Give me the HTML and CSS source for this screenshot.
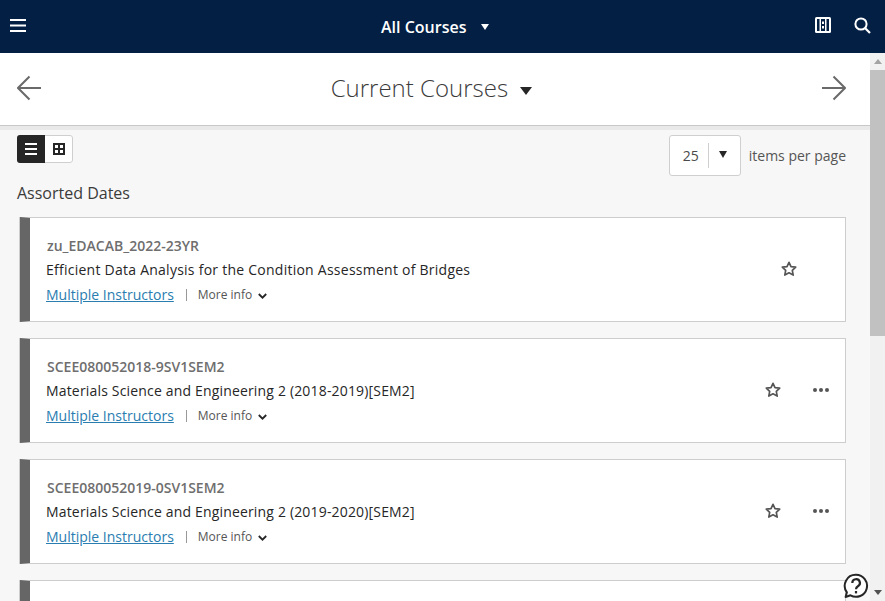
FILE: index.html
```html
<!DOCTYPE html>
<html lang="en">
<head>
<meta charset="utf-8">
<title>Current Courses</title>
<link rel="stylesheet" href="styles.css">
</head>
<body>
<header class="topbar">
  <button class="icon-btn" aria-label="Menu">
    <svg width="16" height="13" viewBox="0 0 16 13"><path d="M0 0h16v2H0zM0 5.500h16v2H0zM0 11h16v2H0z" fill="#fff"/></svg>
  </button>
  <div class="topbar-title">All Courses <span class="caret caret-white"></span></div>
  <div class="topbar-actions">
    <svg width="16" height="16" viewBox="0 0 16 16"><rect width="16" height="16" rx="1.500" fill="#fff"/><path d="M2 2h2.500v12H2zM11.500 2H14v12h-2.500zM6 2h4v12H6z" fill="#031f44"/><path d="M7 4.500h2v2.500H7zM7 9h2v2.500H7z" fill="#fff"/></svg>
    <svg width="17" height="17" viewBox="0 0 17 17" fill="none" stroke="#fff"><circle cx="7" cy="7" r="5.600" stroke-width="2"/><path d="M11 11l5 5" stroke-width="2.200"/></svg>
  </div>
</header>
<div class="shell">
  <main class="main">
    <div class="title-row">
      <svg class="arrow" width="25" height="26" viewBox="0 0 25 26" fill="none" stroke="#6a6a6a" stroke-width="2"><path d="M24 13H1.500M12.500 1.500L1 13l11.500 11.500"/></svg>
      <h1 class="page-title">Current Courses <span class="caret caret-dark"></span></h1>
      <svg class="arrow" width="25" height="26" viewBox="0 0 25 26" fill="none" stroke="#6a6a6a" stroke-width="2"><path d="M1 13h23M12.500 1.500L24 13 12.500 24.500"/></svg>
    </div>
    <div class="title-band"></div>
    <div class="controls">
      <div class="view-toggle">
        <span class="view view-on"><svg width="12" height="12" viewBox="0 0 12 12"><path d="M0 0h12v2H0zM0 5h12v2H0zM0 10h12v2H0z" fill="#fff"/></svg></span>
        <span class="view"><svg width="12" height="12" viewBox="0 0 12 12"><path fill-rule="evenodd" d="M0 0h12v12H0zM2 2v3h3V2zM7 2v3h3V2zM2 7v3h3V7zM7 7v3h3V7z" fill="#262626"/></svg></span>
      </div>
      <div class="pager">
        <div class="select"><span class="select-value">25</span><span class="select-arrow"><span class="caret caret-small"></span></span></div>
        <span class="pager-label">items per page</span>
      </div>
    </div>
    <h2 class="group-title">Assorted Dates</h2>
    <section class="card">
      <div class="card-body">
        <div class="code">zu_EDACAB_2022-23YR</div>
        <div class="name name-long">Efficient Data Analysis for the Condition Assessment of Bridges</div>
        <div class="meta"><a class="instructors" href="#">Multiple Instructors</a><span class="sep"></span><span class="more">More info</span><svg class="chev" width="9" height="6" viewBox="0 0 9 6" fill="none" stroke="#262626" stroke-width="1.800"><path d="M.8 1l3.700 3.700L8.200 1"/></svg></div>
      </div>
      <div class="card-actions card-actions-single">
        <svg class="star" width="16" height="16" viewBox="0 0 16 16" fill="none" stroke="#555" stroke-width="1.700" stroke-linejoin="round"><path d="M8 1.300l2 4.300 4.700.6-3.400 3.200.9 4.700L8 11.800l-4.200 2.300.9-4.700L1.300 6.200 6 5.600z"/></svg>
      </div>
    </section>
    <section class="card">
      <div class="card-body">
        <div class="code">SCEE080052018-9SV1SEM2</div>
        <div class="name">Materials Science and Engineering 2 (2018-2019)[SEM2]</div>
        <div class="meta"><a class="instructors" href="#">Multiple Instructors</a><span class="sep"></span><span class="more">More info</span><svg class="chev" width="9" height="6" viewBox="0 0 9 6" fill="none" stroke="#262626" stroke-width="1.800"><path d="M.8 1l3.700 3.700L8.200 1"/></svg></div>
      </div>
      <div class="card-actions">
        <svg class="star" width="16" height="16" viewBox="0 0 16 16" fill="none" stroke="#555" stroke-width="1.700" stroke-linejoin="round"><path d="M8 1.300l2 4.300 4.700.6-3.400 3.200.9 4.700L8 11.800l-4.200 2.300.9-4.700L1.300 6.200 6 5.600z"/></svg>
        <svg width="16" height="4" viewBox="0 0 16 4" fill="#555"><circle cx="2" cy="2" r="2"/><circle cx="8" cy="2" r="2"/><circle cx="14" cy="2" r="2"/></svg>
      </div>
    </section>
    <section class="card">
      <div class="card-body">
        <div class="code">SCEE080052019-0SV1SEM2</div>
        <div class="name">Materials Science and Engineering 2 (2019-2020)[SEM2]</div>
        <div class="meta"><a class="instructors" href="#">Multiple Instructors</a><span class="sep"></span><span class="more">More info</span><svg class="chev" width="9" height="6" viewBox="0 0 9 6" fill="none" stroke="#262626" stroke-width="1.800"><path d="M.8 1l3.700 3.700L8.200 1"/></svg></div>
      </div>
      <div class="card-actions">
        <svg class="star" width="16" height="16" viewBox="0 0 16 16" fill="none" stroke="#555" stroke-width="1.700" stroke-linejoin="round"><path d="M8 1.300l2 4.300 4.700.6-3.400 3.200.9 4.700L8 11.800l-4.200 2.300.9-4.700L1.300 6.200 6 5.600z"/></svg>
        <svg width="16" height="4" viewBox="0 0 16 4" fill="#555"><circle cx="2" cy="2" r="2"/><circle cx="8" cy="2" r="2"/><circle cx="14" cy="2" r="2"/></svg>
      </div>
    </section>
    <section class="card"></section>
  </main>
  <div class="scrollbar">
    <span class="sb-up"></span>
    <span class="sb-thumb"></span>
    <span class="sb-down"></span>
  </div>
  <svg class="help" width="26" height="26" viewBox="0 0 26 26" fill="none" stroke="#262626" stroke-width="2"><path d="M13 1.800a11 11 0 1 1-5.500 20.500L2.600 24l1.300-4.700A11 11 0 0 1 13 1.800z" fill="#fff" stroke-linejoin="round"/><path d="M9.300 10a3.800 3.800 0 1 1 5.600 3.300c-1.300.8-1.900 1.400-1.900 3" stroke-width="2.200"/><path d="M13 18v2.400" stroke-width="2.200"/></svg>
</div>
</body>
</html>
```
FILE: styles.css
```css
* { box-sizing: border-box; }
html, body { margin: 0; height: 601px; overflow: hidden; }
body { font-family: "Open Sans", sans-serif; color: #262626; background: #f7f7f7; }

.topbar { height: 53px; background: #031f44; display: flex; align-items: center; justify-content: space-between; padding: 0 14px 3px 10px; position: relative; }
.icon-btn { background: none; border: 0; padding: 0; display: flex; }
.topbar-title { position: absolute; left: 381px; top: 16px; color: #fff; font-weight: 600; font-size: 16px; line-height: 22px; white-space: nowrap; }
.topbar-actions { display: flex; align-items: center; gap: 23px; }

.caret { display: inline-block; width: 0; height: 0; border-style: solid; border-color: transparent; border-bottom-width: 0; }
.caret-white { border-width: 6px 4px 0; border-top-color: #fff; margin-left: 10px; vertical-align: 3px; }
.caret-dark { border-width: 8px 6px 0; border-top-color: #262626; margin-left: 6px; vertical-align: 2px; }
.caret-small { border-width: 7px 4px 0; border-top-color: #262626; }

.shell { display: flex; height: 548px; position: relative; overflow: hidden; }
.main { flex: 1; min-width: 0; }
.title-row { height: 73px; background: #fff; border-bottom: 1px solid #c8c8c8; display: flex; align-items: center; justify-content: space-between; padding: 0 24px 2px 17px; }
.page-title { margin: 0; font-size: 24px; font-weight: 300; color: #3b3b3b; line-height: 32px; white-space: nowrap; }
.title-band { height: 4px; background: #e9e9e9; }
.controls { display: flex; justify-content: space-between; align-items: flex-start; padding: 5px 24px 0 17px; }
.view-toggle { display: flex; width: 56px; height: 28px; background: #fff; border: 1px solid #cfcfcf; border-radius: 3px; }
.view { flex: 1; display: flex; align-items: center; justify-content: center; }
.view-on { background: #262626; margin: -1px 0 -1px -1px; flex: 0 0 28px; border-radius: 3px 0 0 3px; }
.pager { display: flex; align-items: center; gap: 8px; }
.select { width: 72px; height: 41px; background: #fff; border: 1px solid #cfcfcf; border-radius: 3px; display: flex; align-items: center; }
.select-value { width: 39px; font-size: 14px; color: #4a4a4a; padding-left: 13px; border-right: 1px solid #cfcfcf; height: 25px; line-height: 25px; }
.select-arrow { flex: 1; display: flex; justify-content: center; margin: -3px 3px 0 0; }
.pager-label { font-size: 14px; color: #555; }
.group-title { margin: 0; padding: 6px 0 0 17px; font-size: 16px; font-weight: 400; line-height: 22px; color: #3b3b3b; }

.card { margin: 13px 24px 16px 20px; height: 105px; background: #fff; border: 1px solid #cdcdcd; border-left: 10px solid #666; box-shadow: -1px 0 0 #cdcdcd; display: flex; justify-content: space-between; }
.card + .card { margin-top: 0; }
.card-body { padding-top: 18px; padding-left: 16px; }
.code { font-size: 14px; font-weight: 600; color: #6e6e6e; line-height: 20px; padding-left: 1px; }
.name { font-size: 14px; color: #262626; line-height: 20px; margin-top: 4px; letter-spacing: .17px; }
.name-long { letter-spacing: .25px; }
.meta { display: flex; align-items: center; margin-top: 5px; line-height: 20px; }
.instructors { font-size: 14px; color: #2a7db0; text-decoration: underline; }
.sep { width: 1px; height: 12px; background: #999; margin: 0 11px 0 12px; }
.more { font-size: 12px; color: #555; }
.chev { margin: 2px 0 0 6px; }
.card-actions { width: 150px; display: flex; align-items: center; gap: 32px; padding: 0 16px 2px 0; justify-content: flex-end; flex: none; }
.card-actions-single { padding-right: 48px; }

.scrollbar { width: 15px; flex: none; background: #f1f1f1; position: relative; display: flex; flex-direction: column; align-items: center; }
.sb-up { width: 0; height: 0; border: 4.500px solid transparent; border-top: 0; border-bottom: 5px solid #a3a3a3; margin: 6px 0 0; }
.sb-thumb { width: 100%; height: 266px; background: #c1c1c1; margin-top: 6px; }
.sb-down { width: 0; height: 0; border: 4.500px solid transparent; border-bottom: 0; border-top: 5px solid #505050; position: absolute; bottom: 6px; }
.help { position: absolute; left: 843px; top: 520px; }
```
